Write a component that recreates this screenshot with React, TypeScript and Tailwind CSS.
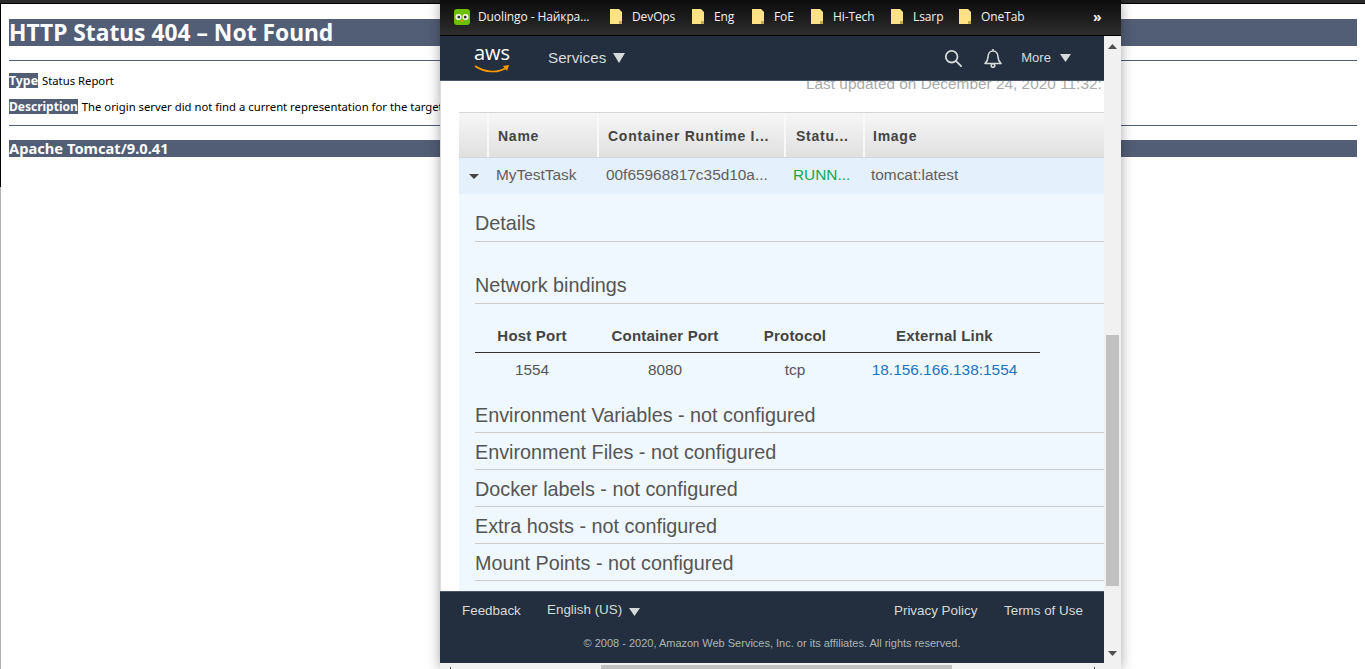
import React from 'react';

const folders = [
  { label: 'DevOps', width: 'w-[82px]' },
  { label: 'Eng', width: 'w-[60px]' },
  { label: 'FoE', width: 'w-[59px]' },
  { label: 'Hi-Tech', width: 'w-[80px]' },
  { label: 'Lsarp', width: 'w-[68px]' },
  { label: 'OneTab', width: 'w-[134px]' },
];

const notConfigured = [
  'Environment Variables - not configured',
  'Environment Files - not configured',
  'Docker labels - not configured',
  'Extra hosts - not configured',
  'Mount Points - not configured',
];

const Caret = ({ className }: { className: string }) => (
  <svg viewBox="0 0 12 10" preserveAspectRatio="none" className={className} fill="currentColor">
    <path d="M0 0h12L6 10z" />
  </svg>
);

const Folder = () => (
  <svg viewBox="0 0 12 15" className="h-[15px] w-3 shrink-0">
    <path d="M0 0h9l3 3v12H0z" fill="#ffe285" />
    <path d="M9 12h3v3H9z" fill="#c9a94e" />
  </svg>
);

const Duolingo = () => (
  <svg viewBox="0 0 16 16" className="h-4 w-4 shrink-0">
    <rect width="16" height="16" rx="3" fill="#6cc000" />
    <circle cx="4.5" cy="8" r="3" fill="#fff" />
    <circle cx="11.5" cy="8" r="3" fill="#fff" />
    <circle cx="4.8" cy="8" r="1.5" fill="#333" />
    <circle cx="11.2" cy="8" r="1.5" fill="#333" />
    <path d="M6.5 11h3L8 13.5z" fill="#f49000" />
  </svg>
);

const BackgroundPage = () => (
  <div className="h-[669px] bg-white font-['Noto_Sans',sans-serif] text-black">
    <div className="h-[3px] bg-[#2b2b2b]" />
    <div className="h-[184px] border-t border-l border-black px-2 pt-[15px]">
      <h1 className="h-[27px] bg-[#525d76] text-[22.8px] leading-[27px] font-bold whitespace-nowrap text-white">
        HTTP Status 404 – Not Found
      </h1>
      <div className="mt-[14px] h-px bg-[#525d76]" />
      <p className="mt-3 flex h-[15px] items-center leading-[15px] whitespace-nowrap">
        <b className="bg-[#525d76] text-[12.3px] text-white">Type</b>
        <span className="ml-1 text-[11.3px]">Status Report</span>
      </p>
      <p className="mt-[11px] flex h-[15px] items-center leading-[15px] whitespace-nowrap">
        <b className="bg-[#525d76] text-[12px] text-white">Description</b>
        <span className="ml-1 text-[11.3px]">
          The origin server did not find a current representation for the target resource
        </span>
      </p>
      <div className="mt-[11px] h-px bg-[#525d76]" />
      <h3 className="mt-[14px] h-[17px] bg-[#525d76] text-[14.7px] leading-[17px] font-bold text-white">
        Apache Tomcat/9.0.41
      </h3>
    </div>
    <div className="h-[482px] border-l border-[#b0b0b0]" />
  </div>
);

const Toolbar = () => (
  <div className="flex h-9 shrink-0 items-center border-b border-black bg-gradient-to-b from-[#0c0c0c] to-[#2e2e2e] pb-[2px] pl-[14px] font-['Open_Sans',sans-serif] text-[12px] tracking-[-0.1px] whitespace-nowrap text-[#f2f2f2]">
    <div className="flex w-[156px] shrink-0 items-center">
      <Duolingo />
      <span className="ml-2">Duolingo - Найкра...</span>
    </div>
    {folders.map((f) => (
      <div key={f.label} className={`flex shrink-0 items-center ${f.width}`}>
        <Folder />
        <span className="ml-[10px]">{f.label}</span>
      </div>
    ))}
    <span className="text-[14px] leading-none font-bold">»</span>
  </div>
);

const AwsHeader = () => (
  <div className="flex h-[45px] shrink-0 items-center border-b border-[#4b5666] bg-[#232f3e] text-[#d5dbdb]">
    <div className="relative ml-[34px] h-[34px] w-9 shrink-0">
      <span className="absolute top-0 left-0 font-['Open_Sans',sans-serif] text-[20px] leading-[24px] text-white">
        aws
      </span>
      <svg viewBox="0 0 36 10" className="absolute top-[23px] left-0 h-[10px] w-9">
        <path d="M1 2c10 7 23 7 31 2" fill="none" stroke="#f90" strokeWidth="1.6" />
        <path d="M29 2l6-1-2 6z" fill="#f90" />
      </svg>
    </div>
    <span className="ml-[38px] font-['Liberation_Sans',sans-serif] text-[15.2px]">Services</span>
    <Caret className="ml-[7px] h-[10px] w-[12px]" />
    <svg viewBox="0 0 20 20" className="ml-[319px] h-[18px] w-[18px]" fill="none" stroke="currentColor" strokeWidth="2">
      <circle cx="8.5" cy="8.5" r="6.5" />
      <path d="M13.5 13.5L19 19" strokeLinecap="round" />
    </svg>
    <svg viewBox="0 0 20 20" className="ml-[21px] h-5 w-5" fill="none" stroke="currentColor" strokeWidth="1.6">
      <path d="M2 15.5c2-2 3-3 3-6.500 0-3.500 2-6 5-6s5 2.500 5 6c0 3.500 1 4.500 3 6.500z" strokeLinejoin="round" />
      <circle cx="10" cy="17.500" r="1.800" />
      <path d="M10 1v2" />
    </svg>
    <span className="ml-[18px] font-['Liberation_Sans',sans-serif] text-[13px]">More</span>
    <Caret className="ml-[9px] h-2 w-[11px]" />
  </div>
);

const headCell = 'flex h-full shrink-0 items-center pt-[2px] text-[14px] font-bold tracking-[0.75px] text-[#444] whitespace-nowrap';
const divider = 'border-r-2 border-[#f8f8f8]';
const rowCell = 'shrink-0 text-[15.4px] whitespace-nowrap';

const TaskTable = () => (
  <div className="ml-[18px] w-[645px] overflow-hidden">
    <div className="flex h-[46px] border-y border-[#d5d5d5] bg-gradient-to-b from-[#f6f6f6] to-[#e0e0e0]">
      <div className={`${headCell} ${divider} w-[30px]`} />
      <div className={`${headCell} ${divider} w-[110px] pl-[9px]`}>Name</div>
      <div className={`${headCell} ${divider} w-[187px] pl-[9px]`}>Container Runtime I...</div>
      <div className={`${headCell} ${divider} w-[79px] pl-[10px]`}>Statu...</div>
      <div className={`${headCell} pl-[8px]`}>Image</div>
    </div>
    <div className="flex h-9 items-center bg-[#e4f0fb] pb-[2px] text-[#5f5f5f]">
      <div className="flex w-[29px] shrink-0 justify-center pt-[2px]">
        <Caret className="h-[5px] w-[10px] text-[#444]" />
      </div>
      <div className={`${rowCell} w-[110px] pl-2`}>MyTestTask</div>
      <div className={`${rowCell} w-[187px] pl-2`}>00f65968817c35d10a...</div>
      <div className={`${rowCell} w-[78px] pl-2 text-[#16a650]`}>RUNN...</div>
      <div className={`${rowCell} pl-2`}>tomcat:latest</div>
    </div>
  </div>
);

const Bindings = () => (
  <table className="mt-[15px] w-[565px] table-fixed text-center">
    <thead>
      <tr className="h-[33px] border-b border-[#333] text-[15px] font-bold text-[#444]">
        <th className="w-[114px] pt-[2px] tracking-[0.2px]">Host Port</th>
        <th className="w-[152px] pt-[2px] tracking-[0.2px]">Container Port</th>
        <th className="w-[108px] pt-[2px] tracking-[0.2px]">Protocol</th>
        <th className="pt-[2px] tracking-[0.2px]">External Link</th>
      </tr>
    </thead>
    <tbody>
      <tr className="h-9 text-[15.4px] text-[#555]">
        <td className="pb-[2px]">1554</td>
        <td className="pb-[2px]">8080</td>
        <td className="pb-[2px]">tcp</td>
        <td className="pb-[2px] text-[#1a73c5]">18.156.166.138:1554</td>
      </tr>
    </tbody>
  </table>
);

const Expanded = () => (
  <div className="ml-[18px] h-[397px] w-[645px] overflow-hidden bg-[#f0f8ff] pl-4 text-[19.8px] text-[#555]">
    <div className="mt-[13px] h-[35px] border-b border-[#ccc] leading-[32px]">Details</div>
    <div className="mt-[26px] h-9 border-b border-[#ccc] leading-[34px]">Network bindings</div>
    <Bindings />
    <div className="mt-[8px]">
      {notConfigured.map((t) => (
        <div key={t} className="h-[37px] border-b border-[#ccc] leading-[38px] whitespace-nowrap">
          {t}
        </div>
      ))}
    </div>
  </div>
);

const Footer = () => (
  <div className="h-[72px] shrink-0 border-t border-[#4b5666] bg-[#232f3e] text-[13.4px] whitespace-nowrap text-[#d5dbdb]">
    <div className="flex h-9 items-center pt-[3px] pl-[22px]">
      <span className="w-[85px] shrink-0">Feedback</span>
      <span className="w-[82px] shrink-0 -translate-y-px">English (US)</span>
      <Caret className="h-2 w-[11px] shrink-0" />
      <span className="ml-[254px] w-[110px] shrink-0">Privacy Policy</span>
      <span>Terms of Use</span>
    </div>
    <p className="mt-[7px] text-center text-[11px] leading-4 text-[#aab7b8]">
      © 2008 - 2020, Amazon Web Services, Inc. or its affiliates. All rights reserved.
    </p>
  </div>
);

const VerticalScrollbar = () => (
  <div className="flex h-full w-[17px] shrink-0 flex-col bg-[#f1f1f1]">
    <div className="flex h-[299px] shrink-0 justify-center pt-[8px]">
      <Caret className="h-[5px] w-[9px] rotate-180 text-[#505050]" />
    </div>
    <div className="mx-[2px] h-[251px] shrink-0 bg-[#c1c1c1]" />
    <div className="flex flex-1 items-end justify-center pb-[13px]">
      <Caret className="h-[5px] w-[9px] text-[#505050]" />
    </div>
  </div>
);

const HorizontalScrollbar = () => (
  <div className="relative h-[6px] shrink-0 overflow-hidden bg-[#f1f1f1] pt-[2px] pl-[161px]">
    <div className="h-full w-[351px] bg-[#c1c1c1]" />
    <div className="absolute top-[4px] left-[10px] h-[2px] w-px bg-[#505050]" />
    <div className="absolute top-[4px] left-[654px] h-[2px] w-px bg-[#505050]" />
  </div>
);

const Popup = () => (
  <div className="absolute top-0 left-[440px] flex h-[669px] w-[681px] flex-col bg-white font-['Liberation_Sans',sans-serif] shadow-[0_0_12px_rgba(0,0,0,0.35)]">
    <Toolbar />
    <div className="flex min-h-0 flex-1">
      <div className="flex w-[664px] flex-col">
        <AwsHeader />
        <div className="h-[510px] shrink-0 overflow-hidden border-l border-[#ddd]">
          <div className="-mt-[7px] ml-[365px] text-[15.4px] leading-5 whitespace-nowrap text-[#aaa]">
            <div className="w-[298px] overflow-hidden">Last updated on December 24, 2020 11:32:</div>
          </div>
          <div className="h-[18px]" />
          <TaskTable />
          <Expanded />
        </div>
        <Footer />
        <HorizontalScrollbar />
      </div>
      <VerticalScrollbar />
    </div>
  </div>
);

export default function App() {
  return (
    <div className="relative h-[669px] w-[1365px] overflow-hidden">
      <BackgroundPage />
      <Popup />
    </div>
  );
}
